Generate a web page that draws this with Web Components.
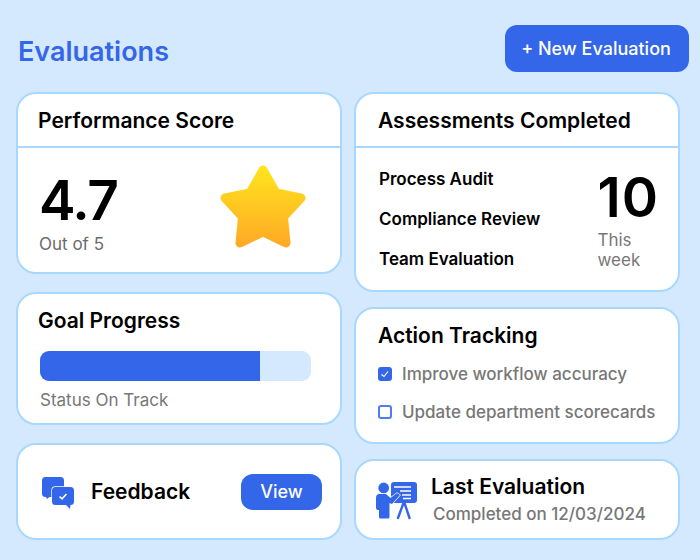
<!DOCTYPE html>
<html lang="en">
<head>
  <meta charset="UTF-8">
  <title>Evaluations</title>
  <style>
    body {margin: 0; background: #d4e9fe; font-family: Inter, sans-serif;}
  </style>
  <script>
    const BLUE = '#3366e8';

    class EvalCard extends HTMLElement {
      connectedCallback() {
        const h = this.getAttribute('height') || 'auto';
        this.attachShadow({mode: 'open'}).innerHTML = `
          <style>
            :host {
              display: block;
              box-sizing: border-box;
              height: ${h}px;
              background: #fff;
              border: 2px solid #a8d8ff;
              border-radius: 20px;
              overflow: hidden;
            }
          </style>
          <slot></slot>
        `;
      }
    }
    customElements.define('eval-card', EvalCard);

    class CardHead extends HTMLElement {
      connectedCallback() {
        this.attachShadow({mode: 'open'}).innerHTML = `
          <style>
            :host {
              display: block;
              box-sizing: border-box;
              height: 54px;
              padding: 13px 0 0 var(--head-left, 20px);
              border-bottom: 2px solid #a8d8ff;
              font-size: 21px;
              line-height: 27px;
              font-weight: 600;
              color: #000;
            }
          </style>
          <slot></slot>
        `;
      }
    }
    customElements.define('card-head', CardHead);

    class BlueButton extends HTMLElement {
      connectedCallback() {
        this.attachShadow({mode: 'open'}).innerHTML = `
          <style>
            :host {
              display: inline-flex;
              align-items: center;
              justify-content: center;
              box-sizing: border-box;
              background: ${BLUE};
              color: #fff;
              font-size: 18px;
              font-weight: 500;
              border-radius: 12px;
            }
          </style>
          <slot></slot>
        `;
      }
    }
    customElements.define('blue-button', BlueButton);

    class EvalHeader extends HTMLElement {
      connectedCallback() {
        this.attachShadow({mode: 'open'}).innerHTML = `
          <style>
            :host {
              display: flex;
              justify-content: space-between;
              align-items: center;
              height: 47px;
              margin-bottom: 20px;
            }
            h1 {margin: 6px 0 0 2px; font-size: 27px; line-height: 52px; font-weight: 600; color: ${BLUE};}
            blue-button {width: 184px; height: 47px; margin-right: -9px; padding-right: 2px;}
          </style>
          <h1>Evaluations</h1>
          <blue-button>+ New Evaluation</blue-button>
        `;
      }
    }
    customElements.define('eval-header', EvalHeader);

    class ScoreCard extends HTMLElement {
      connectedCallback() {
        this.attachShadow({mode: 'open'}).innerHTML = `
          <style>
            :host {display: block;}
            .body {display: flex; justify-content: space-between; padding: 0 32px 0 21px; height: 124px;}
            .num {font-size: 55px; line-height: 60px; font-weight: 600; letter-spacing: -1.5px; color: #000; margin-top: 22px;}
            .sub {font-size: 17px; line-height: 20px; color: #6b6b6b; margin-top: 4px;}
            svg {margin-top: 17px;}
          </style>
          <eval-card height="182">
            <card-head>Performance Score</card-head>
            <div class="body">
              <div>
                <div class="num">4.7</div>
                <div class="sub">Out of 5</div>
              </div>
              <svg width="90" height="88" viewBox="0 0 90 88">
                <defs>
                  <linearGradient id="g" gradientUnits="userSpaceOnUse" x1="0" y1="0" x2="0" y2="84">
                    <stop offset="0" stop-color="#ffe61c"/>
                    <stop offset="1" stop-color="#ffa726"/>
                  </linearGradient>
                </defs>
                <path d="M45 5 L58 28 L83 33 L65.5 52 L68 78 L45 67 L22 78 L24.5 52 L7 33 L32 28 Z"
                  fill="url(#g)" stroke="url(#g)" stroke-width="9" stroke-linejoin="round"/>
              </svg>
            </div>
          </eval-card>
        `;
      }
    }
    customElements.define('score-card', ScoreCard);

    class GoalCard extends HTMLElement {
      connectedCallback() {
        this.attachShadow({mode: 'open'}).innerHTML = `
          <style>
            :host {display: block;}
            .wrap {padding: 13px 29px 0 20px;}
            .title {font-size: 21px; line-height: 27px; font-weight: 600; color: #000;}
            .track {height: 30px; margin: 17px 0 0 2px; background: #d4e9fe; border-radius: 9px; overflow: hidden;}
            .fill {width: 220px; height: 100%; background: ${BLUE};}
            .sub {font-size: 17px; line-height: 20px; color: #777; margin: 9px 0 0 2px;}
          </style>
          <eval-card height="133">
            <div class="wrap">
              <div class="title">Goal Progress</div>
              <div class="track"><div class="fill"></div></div>
              <div class="sub">Status On Track</div>
            </div>
          </eval-card>
        `;
      }
    }
    customElements.define('goal-card', GoalCard);

    class FeedbackCard extends HTMLElement {
      connectedCallback() {
        this.attachShadow({mode: 'open'}).innerHTML = `
          <style>
            :host {display: block;}
            .row {display: flex; align-items: center; height: 93px; padding: 0 18px 0 23px;}
            svg {flex: none;}
            .label {flex: 1; margin-left: 15px; font-size: 21px; font-weight: 600; color: #000;}
            blue-button {width: 81px; height: 36px;}
          </style>
          <eval-card height="97">
            <div class="row">
              <svg width="35" height="35" viewBox="0 0 35 35">
                <path d="M4.5 3 H19.5 Q23 3 23 6.5 V19.5 Q23 23 19.5 23 H8.5 L6 25 L5 23 H4.5 Q1 23 1 19.5 V6.5 Q1 3 4.5 3 Z" fill="${BLUE}"/>
                <path d="M14.5 13 H29.5 Q33 13 33 16.5 V27.5 Q33 31 29.5 31 H29.5 L29 35 L25 31 H14.5 Q11 31 11 27.5 V16.5 Q11 13 14.5 13 Z" fill="${BLUE}" stroke="#fff" stroke-width="1.4" paint-order="stroke"/>
                <path d="M18.5 22.5 L21 24.8 L25.5 20" fill="none" stroke="#fff" stroke-width="1.6"/>
              </svg>
              <div class="label">Feedback</div>
              <blue-button>View</blue-button>
            </div>
          </eval-card>
        `;
      }
    }
    customElements.define('feedback-card', FeedbackCard);

    class AssessCard extends HTMLElement {
      connectedCallback() {
        this.attachShadow({mode: 'open'}).innerHTML = `
          <style>
            :host {display: block; --head-left: 22px;}
            .body {display: flex; justify-content: space-between; padding: 0 19px 0 23px;}
            ul {list-style: none; margin: 0; padding: 21px 0 0; display: flex; flex-direction: column; gap: 20px;}
            li {font-size: 17px; line-height: 20px; font-weight: 600; color: #000;}
            .num {font-size: 55px; line-height: 66px; font-weight: 600; letter-spacing: 1px; color: #000; margin-top: 16px;}
            .sub {font-size: 17px; line-height: 20px; color: #777; margin-top: 0;}
          </style>
          <eval-card height="200">
            <card-head>Assessments Completed</card-head>
            <div class="body">
              <ul>
                <li>Process Audit</li>
                <li>Compliance Review</li>
                <li>Team Evaluation</li>
              </ul>
              <div>
                <div class="num">10</div>
                <div class="sub">This<br>week</div>
              </div>
            </div>
          </eval-card>
        `;
      }
    }
    customElements.define('assess-card', AssessCard);

    class CheckRow extends HTMLElement {
      connectedCallback() {
        const done = this.hasAttribute('checked');
        this.attachShadow({mode: 'open'}).innerHTML = `
          <style>
            :host {display: flex; align-items: center; font-size: 17px; line-height: 20px; color: #777; font-weight: 500;}
            .box {
              box-sizing: border-box;
              width: 14px; height: 14px;
              margin-right: 10px;
              border-radius: 3px;
              border: 2px solid #4f7df0;
              background: ${done ? BLUE : '#fff'};
              ${done ? `border-color: ${BLUE};` : ''}
            }
            svg {display: block;}
          </style>
          <div class="box">${done ? '<svg width="10" height="10" viewBox="0 0 10 10"><path d="M1.5 5.5 L4 7.5 L8 2.5" fill="none" stroke="#fff" stroke-width="1.2"/></svg>' : ''}</div>
          <slot></slot>
        `;
      }
    }
    customElements.define('check-row', CheckRow);

    class ActionCard extends HTMLElement {
      connectedCallback() {
        this.attachShadow({mode: 'open'}).innerHTML = `
          <style>
            :host {display: block;}
            .wrap {padding: 13px 0 0 22px;}
            .title {font-size: 21px; line-height: 27px; font-weight: 600; color: #000;}
            .list {display: flex; flex-direction: column; gap: 18px; margin-top: 15px;}
          </style>
          <eval-card height="137">
            <div class="wrap">
              <div class="title">Action Tracking</div>
              <div class="list">
                <check-row checked>Improve workflow accuracy</check-row>
                <check-row>Update department scorecards</check-row>
              </div>
            </div>
          </eval-card>
        `;
      }
    }
    customElements.define('action-card', ActionCard);

    class LastCard extends HTMLElement {
      connectedCallback() {
        this.attachShadow({mode: 'open'}).innerHTML = `
          <style>
            :host {display: block;}
            .row {display: flex; height: 77px; padding-left: 20px;}
            svg {flex: none; margin-top: 21px;}
            .title {font-size: 21px; line-height: 27px; font-weight: 600; color: #000; margin-top: 12px;}
            .sub {font-size: 17px; line-height: 20px; color: #777; font-weight: 500; margin: 4px 0 0 2px;}
            .text {margin-left: 12px;}
          </style>
          <eval-card height="81">
            <div class="row">
              <svg width="43" height="38" viewBox="0 0 43 38">
                <circle cx="7.7" cy="6" r="5.4" fill="${BLUE}"/>
                <path d="M18 0 H38 Q41 0 41 3 V18 Q41 21 38 21 H15 V3 Q15 0 18 0 Z" fill="${BLUE}"/>
                <path d="M3.5 12 H10 L14.5 16 L21 11 L24 13 L16 22 L13.5 21 V35 Q13.5 36.5 12 36.5 H4.5 Q3 36.5 3 35 V28 H2 Q0 28 0 26 V16 Q0 12 3.5 12 Z" fill="${BLUE}" stroke="#fff" stroke-width="1.2" paint-order="stroke"/>
                <path d="M18 5 H35 M24 9 H35 M26 13 H35 M27 16.5 H35" stroke="#fff" stroke-width="1.5"/>
                <path d="M27.5 21 L22 36 M28.5 21 L33.5 36" stroke="${BLUE}" stroke-width="2.4" stroke-linecap="round"/>
              </svg>
              <div class="text">
                <div class="title">Last Evaluation</div>
                <div class="sub">Completed on 12/03/2024</div>
              </div>
            </div>
          </eval-card>
        `;
      }
    }
    customElements.define('last-card', LastCard);

    class EvalPage extends HTMLElement {
      connectedCallback() {
        this.attachShadow({mode: 'open'}).innerHTML = `
          <style>
            :host {display: block; box-sizing: border-box; width: 700px; height: 560px; padding: 25px 20px 0 16px;}
            .cols {display: grid; grid-template-columns: 326px 326px; column-gap: 12px;}
            .col {display: flex; flex-direction: column;}
            .left {gap: 18px;}
            .right {gap: 15px;}
          </style>
          <eval-header></eval-header>
          <div class="cols">
            <div class="col left">
              <score-card></score-card>
              <goal-card></goal-card>
              <feedback-card></feedback-card>
            </div>
            <div class="col right">
              <assess-card></assess-card>
              <action-card></action-card>
              <last-card></last-card>
            </div>
          </div>
        `;
      }
    }
    customElements.define('eval-page', EvalPage);
  </script>
</head>
<body>
  <eval-page></eval-page>
</body>
</html>
